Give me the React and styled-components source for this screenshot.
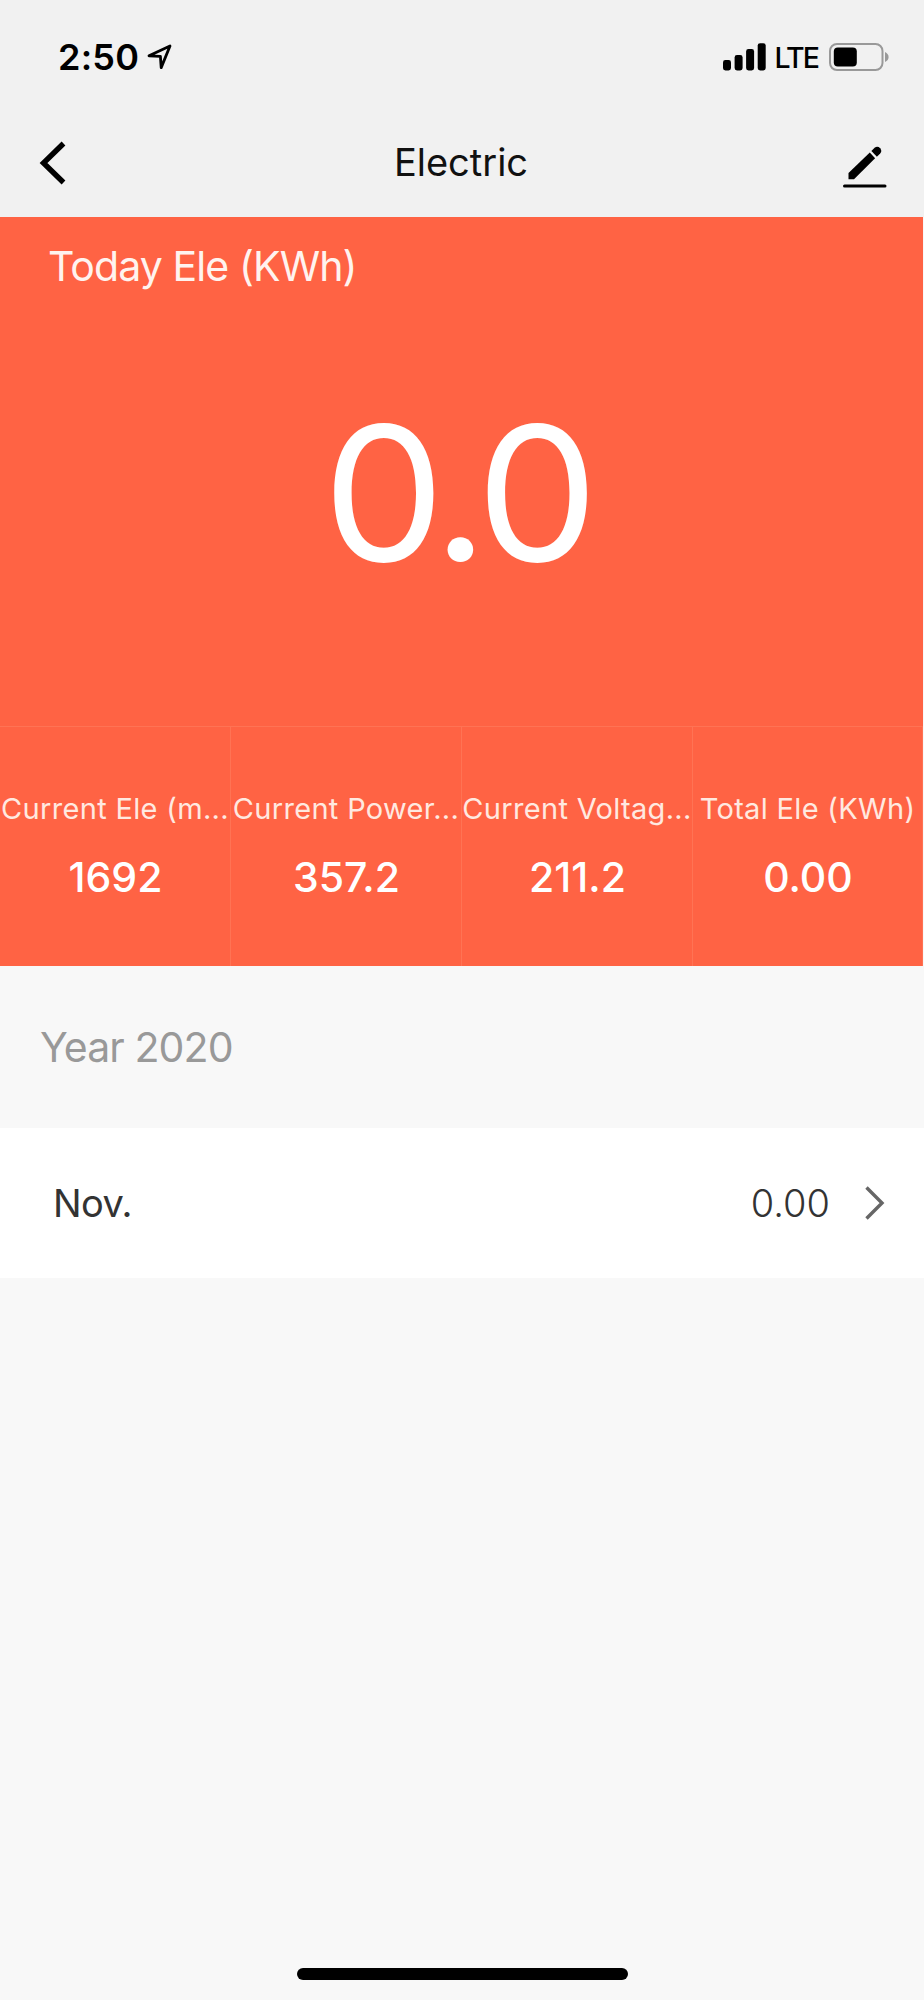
import React from 'react';
import styled, { createGlobalStyle } from 'styled-components';

const GlobalStyle = createGlobalStyle`
  body {
    margin: 0;
    background: #f8f8f8;
    font-family: Inter, 'Liberation Sans', sans-serif;
  }
`;

const Screen = styled.div`
  box-sizing: border-box;
  display: flex;
  flex-direction: column;
  height: 2000px;
  width: 924px;
`;

const StatusBar = styled.div`
  align-items: center;
  background: #f1f1f1;
  box-sizing: border-box;
  display: flex;
  height: 113px;
  justify-content: space-between;
  padding: 0 34px 0 58px;
`;

const StatusGroup = styled.div`
  align-items: center;
  display: flex;
`;

const Time = styled.span`
  font-size: 36px;
  font-weight: 600;
  letter-spacing: .2px;
  line-height: 40px;
  margin-right: 8px;
`;

const Network = styled.span`
  font-size: 28.5px;
  font-weight: 500;
  letter-spacing: -1.9px;
  line-height: 32px;
  margin: 3px 11px 0 8px;
`;

const NavBar = styled.div`
  align-items: center;
  background: #f1f1f1;
  box-sizing: border-box;
  display: grid;
  grid-template-columns: 100px 1fr 100px;
  height: 104px;
  padding: 0 37px 6px 39px;
`;

const NavTitle = styled.h1`
  color: #111;
  font-size: 38px;
  font-weight: 400;
  line-height: 44px;
  margin: 0;
  padding-right: 4px;
  text-align: center;
`;

const NavButton = styled.button`
  background: none;
  border: 0;
  display: flex;
  justify-content: ${({ $end }) => ($end ? 'flex-end' : 'flex-start')};
  padding: ${({ $end }) => ($end ? '9px 0 0' : '1px 0 0')};
`;

const Summary = styled.section`
  background: #ff6344;
  color: #fff;
  display: flex;
  flex-direction: column;
  height: 749px;
  margin-right: 1px;
`;

const SummaryTitle = styled.div`
  color: #fff3ef;
  font-size: 41px;
  letter-spacing: -.9px;
  line-height: 50px;
  padding: 24px 0 0 48px;
`;

const Total = styled.div`
  font-size: 187px;
  letter-spacing: -7px;
  line-height: 200px;
  padding: 102px 9px 0 0;
  text-align: center;
  transform: scaleX(1.035);
`;

const Stats = styled.div`
  border-top: 1px solid #ff7354;
  display: grid;
  grid-template-columns: 231px 231px 231px 1fr;
  height: 239px;
  margin-top: auto;
`;

const Stat = styled.div`
  border-right: 1px solid #ff7354;
  box-sizing: border-box;
  padding-top: 62px;
  text-align: center;
  white-space: nowrap;
`;

const StatLabel = styled.div`
  color: #ffe9e0;
  font-size: 29px;
  letter-spacing: .32px;
  line-height: 40px;
`;

const StatValue = styled.div`
  font-size: 41px;
  font-weight: 500;
  line-height: 50px;
  margin-top: 23px;
  padding-left: 1px;
`;

const YearHeading = styled.h2`
  color: #999;
  font-size: 41px;
  font-weight: 400;
  letter-spacing: -.9px;
  line-height: 162px;
  margin: 0;
  padding-left: 40px;
`;

const MonthRow = styled.div`
  align-items: center;
  background: #fff;
  color: #333;
  display: flex;
  font-size: 38px;
  height: 150px;
  padding: 0 39px 0 53px;
`;

const MonthName = styled.span`
  letter-spacing: -.6px;
`;

const MonthValue = styled.span`
  font-weight: 300;
  margin: 0 35px 0 auto;
`;

const HomeIndicator = styled.div`
  background: #000;
  border-radius: 6px;
  height: 12px;
  margin: auto 0 20px 297px;
  width: 331px;
`;

const LocationIcon = () => (
  <svg width="26" height="26" viewBox="0 0 26 26" fill="none">
    <path
      d="M2 11.8 L23 2 L14.2 23.6 L13.4 12.4 Z"
      stroke="#000"
      strokeWidth="2.8"
      strokeLinejoin="round"
    />
  </svg>
);

const SignalIcon = () => (
  <svg width="43" height="28" viewBox="0 0 43 28">
    <rect x="0" y="17" width="8" height="10.5" rx="2.4" />
    <rect x="11.6" y="12" width="8" height="15.5" rx="2.4" />
    <rect x="23.1" y="6" width="8" height="21.5" rx="2.4" />
    <rect x="34.7" y="0.2" width="8" height="27.3" rx="2.4" />
  </svg>
);

const BatteryIcon = () => (
  <svg width="61" height="28" viewBox="0 0 61 28">
    <rect x="1" y="1" width="52.5" height="26" rx="7" fill="none" stroke="#999" strokeWidth="2" />
    <rect x="4.8" y="4.6" width="23" height="18.8" rx="4" />
    <path d="M56 9 C60.8 11 60.8 17 56 19 Z" fill="#999" />
  </svg>
);

const BackIcon = () => (
  <svg width="28" height="44" viewBox="0 0 28 44" fill="none">
    <path d="M24.5 2.5 L4.5 22 L24.5 41.5" stroke="#000" strokeWidth="5.4" />
  </svg>
);

const EditIcon = () => (
  <svg width="44" height="42" viewBox="0 0 44 42">
    <path d="M5.5 27 L26.8 6.6 L32.1 12.2 L11 33.3 L5.5 33.3 Z" />
    <path d="M28.4 5 L31.6 1.8 Q34.5 -.4 37.2 2.2 Q39.4 5 37.2 7.6 L33.9 10.7 Z" />
    <rect x="0" y="38.5" width="43.5" height="3" rx="1.5" />
  </svg>
);

const ArrowIcon = () => (
  <svg width="20" height="34" viewBox="0 0 20 34" fill="none">
    <path d="M1.5 1.5 L17 17 L1.5 32.5" stroke="#666" strokeWidth="3.4" />
  </svg>
);

const stats = [
  { label: 'Current Ele (m...', value: '1692' },
  { label: 'Current Power...', value: '357.2' },
  { label: 'Current Voltag...', value: '211.2' },
  { label: 'Total Ele (KWh)', value: '0.00' },
];

const App = () => (
  <>
    <GlobalStyle />
    <Screen>
      <StatusBar>
        <StatusGroup>
          <Time>2:50</Time>
          <LocationIcon />
        </StatusGroup>
        <StatusGroup>
          <SignalIcon />
          <Network>LTE</Network>
          <BatteryIcon />
        </StatusGroup>
      </StatusBar>
      <NavBar>
        <NavButton aria-label="Back"><BackIcon /></NavButton>
        <NavTitle>Electric</NavTitle>
        <NavButton $end aria-label="Edit"><EditIcon /></NavButton>
      </NavBar>
      <Summary>
        <SummaryTitle>Today Ele (KWh)</SummaryTitle>
        <Total>0.0</Total>
        <Stats>
          {stats.map(({ label, value }) => (
            <Stat key={label}>
              <StatLabel>{label}</StatLabel>
              <StatValue>{value}</StatValue>
            </Stat>
          ))}
        </Stats>
      </Summary>
      <YearHeading>Year 2020</YearHeading>
      <MonthRow>
        <MonthName>Nov.</MonthName>
        <MonthValue>0.00</MonthValue>
        <ArrowIcon />
      </MonthRow>
      <HomeIndicator />
    </Screen>
  </>
);

export default App;
